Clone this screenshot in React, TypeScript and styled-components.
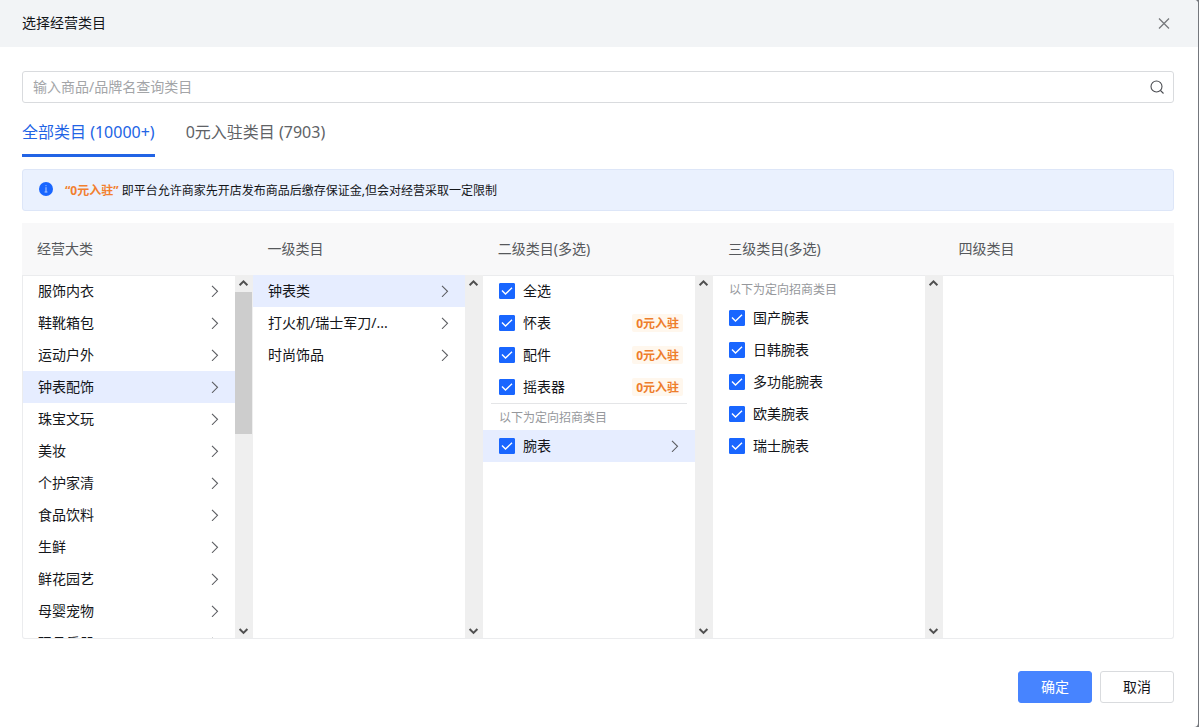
import React, { useState } from 'react';
import styled, { createGlobalStyle, css } from 'styled-components';

const GlobalStyle = createGlobalStyle`
  *, *::before, *::after { box-sizing: border-box; }
  html, body, #root { height: 100%; }
  body {
    margin: 0;
    background: #74777d;
    color: #14161a;
    font-family: "Noto Sans", "Noto Sans CJK SC", sans-serif;
    font-size: 14px;
  }
  button, input { font: inherit; color: inherit; }
`;

const Dialog = styled.section`
  display: flex;
  flex-direction: column;
  min-height: 100%;
  margin-right: 1px;
  background: #fff;
  border-radius: 0 4px 4px 0;
  overflow: hidden;
`;

const DialogHeader = styled.header`
  display: flex;
  align-items: center;
  justify-content: space-between;
  height: 47px;
  padding: 0 23px 2px 22px;
  background: #f2f4f6;
`;

const Title = styled.h1`
  margin: 0;
  font-size: 14px;
  font-weight: 400;
  line-height: 22px;
`;

const IconButton = styled.button`
  display: flex;
  padding: 4px;
  border: 0;
  background: none;
  cursor: pointer;
`;

const DialogBody = styled.div`
  display: flex;
  flex: 1;
  flex-direction: column;
  padding: 24px 24px 0 22px;
`;

const SearchBox = styled.label`
  display: flex;
  align-items: center;
  height: 32px;
  padding: 0 8px 0 10px;
  border: 1px solid #d9dbde;
  border-radius: 3px;
`;

const SearchInput = styled.input`
  flex: 1;
  min-width: 0;
  padding: 0;
  border: 0;
  outline: 0;
  background: none;
  line-height: 22px;
  &::placeholder { color: #a3a5a8; opacity: 1; }
`;

const Tabs = styled.div`
  display: flex;
  gap: 31px;
  height: 54px;
`;

const Tab = styled.button<{ $active?: boolean }>`
  padding: 7px 0 0;
  border: 0;
  border-bottom: 3px solid ${p => (p.$active ? '#2264e5' : 'transparent')};
  background: none;
  color: ${p => (p.$active ? '#2264e5' : '#606266')};
  font-size: 16px;
  line-height: 24px;
  cursor: pointer;
`;

const Notice = styled.div`
  display: flex;
  align-items: flex-start;
  gap: 12px;
  height: 42px;
  margin-top: 12px;
  padding: 10px 16px;
  border: 1px solid #dde6f8;
  border-radius: 3px;
  background: #eaf1fe;
  font-size: 12px;
  line-height: 22px;
`;

const NoticeIcon = styled.svg`
  flex: none;
  width: 14px;
  height: 14px;
  margin-top: 2px;
`;

const NoticeText = styled.p`
  margin: 0;
`;

const Accent = styled.strong`
  color: #f2802f;
  font-weight: 700;
`;

const HeadRow = styled.div`
  display: grid;
  grid-template-columns: repeat(5, minmax(0, 1fr));
  align-items: center;
  height: 52px;
  margin-top: 12px;
  background: #f8f8f9;
  color: #56585c;
`;

const HeadCell = styled.div`
  padding-left: 15px;
  line-height: 22px;
`;

const Columns = styled.div`
  display: grid;
  grid-template-columns: repeat(5, minmax(0, 1fr));
  flex: 1;
  min-height: 240px;
  border: solid #ebecee;
  border-width: 0 1px 1px;
  border-radius: 0 0 3px 3px;
  box-shadow: inset 0 1px #ebecee;
  overflow: hidden;
`;

const Column = styled.div`
  display: flex;
  min-width: 0;
`;

const List = styled.ul`
  flex: 1;
  height: 0;
  min-width: 0;
  min-height: 100%;
  margin: 0;
  padding: 0;
  list-style: none;
  overflow: hidden;
`;

const rowStyle = css<{ $active?: boolean }>`
  display: flex;
  align-items: center;
  gap: 8px;
  width: 100%;
  height: 32px;
  border: 0;
  background: ${p => (p.$active ? '#e6edff' : 'transparent')};
  line-height: 22px;
  text-align: left;
  cursor: pointer;
`;

const RowButton = styled.button<{ $active?: boolean }>`
  ${rowStyle}
  padding: 0 12px 0 15px;
`;

const RowLabel = styled.label<{ $active?: boolean }>`
  ${rowStyle}
  padding: 0 12px 0 16px;
`;

const RowText = styled.span`
  flex: 1;
  white-space: nowrap;
`;

const CheckWrap = styled.span`
  display: grid;
  width: 16px;
  height: 16px;
  > * { grid-area: 1 / 1; }
  > svg { pointer-events: none; }
`;

const CheckInput = styled.input`
  appearance: none;
  width: 16px;
  height: 16px;
  margin: 0;
  border: 1px solid #c9ccd1;
  border-radius: 1px;
  background: #fff;
  &:checked { border-color: #1966ff; background: #1966ff; }
`;

const Tag = styled.span`
  height: 18px;
  padding: 0 4px;
  border-radius: 2px;
  background: #fff7ed;
  color: #ee7d2b;
  font-size: 12px;
  font-weight: 700;
  line-height: 20px;
`;

const GroupNote = styled.li<{ $divided?: boolean }>`
  height: 27px;
  margin: 0 8px;
  padding: ${p => (p.$divided ? 4 : 5)}px 8px 0;
  border-top: ${p => (p.$divided ? '1px solid #e4e5e7' : '0')};
  color: #96989c;
  font-size: 12px;
  line-height: 20px;
`;

const Track = styled.div`
  display: flex;
  flex-direction: column;
  align-items: center;
  width: 18px;
  padding-right: 1px;
  background: #efefef;
`;

const TrackArrow = styled.svg`
  flex: none;
  width: 17px;
  height: 17px;
`;

const Thumb = styled.div<{ $visible: boolean }>`
  width: 17px;
  height: 142px;
  background: ${p => (p.$visible ? '#cdcdcd' : 'transparent')};
`;

const Spacer = styled.div`
  flex: 1;
`;

const Actions = styled.footer`
  display: flex;
  justify-content: flex-end;
  gap: 8px;
  padding: 32px 24px 24px;
`;

const ActionButton = styled.button<{ $primary?: boolean }>`
  width: 74px;
  height: 32px;
  padding: 0;
  border: 1px solid ${p => (p.$primary ? '#4784ff' : '#d9dbde')};
  border-radius: 3px;
  background: ${p => (p.$primary ? '#4784ff' : '#fff')};
  color: ${p => (p.$primary ? '#fff' : '#14161a')};
  line-height: 22px;
  cursor: pointer;
`;

const Chevron = () => (
  <svg width="12" height="12" viewBox="0 0 12 12" fill="none" stroke="#5c5e62" strokeWidth="1.1" aria-hidden="true">
    <path d="M1 .8 6.5 6.3 1 11.8" />
  </svg>
);

const CloseIcon = () => (
  <svg width="14" height="14" viewBox="0 0 14 14" fill="none" stroke="#77797d" strokeWidth="1.3" aria-hidden="true">
    <path d="M2 2.5l10 10M12 2.5l-10 10" />
  </svg>
);

const SearchIcon = () => (
  <svg width="16" height="16" viewBox="0 0 16 16" fill="none" stroke="#4b4d52" strokeWidth="1.1" aria-hidden="true">
    <circle cx="7.5" cy="7.5" r="5.5" />
    <path d="M11.5 11.5l3 3" />
  </svg>
);

const InfoIcon = () => (
  <NoticeIcon viewBox="0 0 14 14" aria-hidden="true">
    <circle cx="7" cy="7" r="7" fill="#1966ff" />
    <path d="M7 3.2v1M7 5.2v4.6M5.6 10h2.8" stroke="#b9d0ff" strokeWidth="1" />
  </NoticeIcon>
);

const Scrollbar = ({ thumb = false }: { thumb?: boolean }) => (
  <Track aria-hidden="true">
    <TrackArrow viewBox="0 0 17 17" fill="none" stroke="#505050" strokeWidth="2">
      <path d="M4.6 10.2 8.5 6.3l3.9 3.9" />
    </TrackArrow>
    <Thumb $visible={thumb} />
    <Spacer />
    <TrackArrow viewBox="0 0 17 17" fill="none" stroke="#505050" strokeWidth="2">
      <path d="M4.6 8l3.9 3.9L12.4 8" />
    </TrackArrow>
  </Track>
);

type OptionProps = { name: string; active?: boolean; free?: boolean; nested?: boolean };

const Option = ({ name, active, free, nested }: OptionProps) => (
  <li>
    <RowLabel $active={active}>
      <CheckWrap>
        <CheckInput type="checkbox" defaultChecked />
        <svg width="16" height="16" viewBox="0 0 16 16" fill="none" stroke="#fff" strokeWidth="1.4">
          <path d="M3 7.5l3.5 3.6L13 4.7" />
        </svg>
      </CheckWrap>
      <RowText>{name}</RowText>
      {free && <Tag>0元入驻</Tag>}
      {nested && <Chevron />}
    </RowLabel>
  </li>
);

const NavList = ({ items, initial }: { items: string[]; initial: string }) => {
  const [current, setCurrent] = useState(initial);
  return (
    <List>
      {items.map(name => (
        <li key={name}>
          <RowButton type="button" $active={name === current} onClick={() => setCurrent(name)}>
            <RowText>{name}</RowText>
            <Chevron />
          </RowButton>
        </li>
      ))}
    </List>
  );
};

const headings = ['经营大类', '一级类目', '二级类目(多选)', '三级类目(多选)', '四级类目'];
const majors = [
  '服饰内衣', '鞋靴箱包', '运动户外', '钟表配饰', '珠宝文玩', '美妆',
  '个护家清', '食品饮料', '生鲜', '鲜花园艺', '母婴宠物', '玩具乐器',
];
const firstLevel = ['钟表类', '打火机/瑞士军刀/...', '时尚饰品'];
const freeItems = ['怀表', '配件', '摇表器'];
const thirdLevel = ['国产腕表', '日韩腕表', '多功能腕表', '欧美腕表', '瑞士腕表'];

export default function App() {
  const [tab, setTab] = useState(0);
  return (
    <>
      <GlobalStyle />
      <Dialog role="dialog" aria-labelledby="dialog-title">
        <DialogHeader>
          <Title id="dialog-title">选择经营类目</Title>
          <IconButton type="button" aria-label="关闭"><CloseIcon /></IconButton>
        </DialogHeader>
        <DialogBody>
          <SearchBox>
            <SearchInput type="text" placeholder="输入商品/品牌名查询类目" />
            <SearchIcon />
          </SearchBox>
          <Tabs role="tablist">
            {['全部类目 (10000+)', '0元入驻类目 (7903)'].map((name, i) => (
              <Tab key={name} type="button" role="tab" aria-selected={tab === i} $active={tab === i} onClick={() => setTab(i)}>
                {name}
              </Tab>
            ))}
          </Tabs>
          <Notice>
            <InfoIcon />
            <NoticeText>
              <Accent>“0元入驻”</Accent> 即平台允许商家先开店发布商品后缴存保证金,但会对经营采取一定限制
            </NoticeText>
          </Notice>
          <HeadRow>
            {headings.map(name => <HeadCell key={name}>{name}</HeadCell>)}
          </HeadRow>
          <Columns>
            <Column>
              <NavList items={majors} initial="钟表配饰" />
              <Scrollbar thumb />
            </Column>
            <Column>
              <NavList items={firstLevel} initial="钟表类" />
              <Scrollbar />
            </Column>
            <Column>
              <List>
                <Option name="全选" />
                {freeItems.map(name => <Option key={name} name={name} free />)}
                <GroupNote $divided>以下为定向招商类目</GroupNote>
                <Option name="腕表" active nested />
              </List>
              <Scrollbar />
            </Column>
            <Column>
              <List>
                <GroupNote>以下为定向招商类目</GroupNote>
                {thirdLevel.map(name => <Option key={name} name={name} />)}
              </List>
              <Scrollbar />
            </Column>
            <Column />
          </Columns>
        </DialogBody>
        <Actions>
          <ActionButton type="button" $primary>确定</ActionButton>
          <ActionButton type="button">取消</ActionButton>
        </Actions>
      </Dialog>
    </>
  );
}
